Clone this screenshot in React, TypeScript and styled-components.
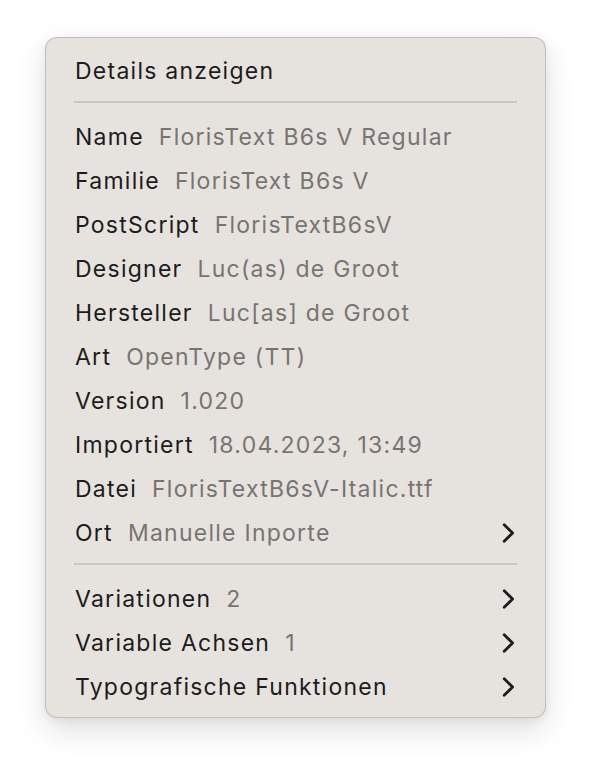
import React from "react";
import styled, { createGlobalStyle } from "styled-components";

const Global = createGlobalStyle`
  html, body { margin: 0; padding: 0; background: #ffffff; }
  body { font-family: Inter, "Noto Sans", sans-serif; -webkit-font-smoothing: antialiased; }
`;

const Page = styled.div`
  width: 592px;
  height: 772px;
  padding: 37px 0 0 45px;
  box-sizing: border-box;
`;

const Menu = styled.div`
  width: 501px;
  box-sizing: border-box;
  background: #e6e3df;
  border: 1px solid rgba(0, 0, 0, 0.16);
  border-radius: 12px;
  padding: 11px 0 8px;
  box-shadow: 0 12px 30px rgba(0, 0, 0, 0.13), 0 2px 8px rgba(0, 0, 0, 0.06);
`;

const Item = styled.div`
  height: 44px;
  display: flex;
  align-items: center;
  padding: 0 30px 0 29px;
  font-size: 23px;
  letter-spacing: 1.25px;
  line-height: 44px;
  color: #1c1c1c;
  white-space: nowrap;
`;

const Label = styled.span`
  color: #1c1c1c;
`;

const Value = styled.span`
  color: #777471;
  margin-left: 15px;
`;

const Spacer = styled.span`
  flex: 1;
`;

const Separator = styled.div`
  height: 2px;
  margin: 8px 28px 12px 28px;
  background: #cac6c2;
`;

const Chevron = () => (
  <svg width="13" height="20" viewBox="0 0 13 20" aria-hidden="true">
    <polyline
      points="2.2,1.8 10.6,10 2.2,18.2"
      fill="none"
      stroke="#1c1c1c"
      strokeWidth="2.8"
      strokeLinecap="round"
      strokeLinejoin="round"
    />
  </svg>
);

type Row = { label: string; value?: string; sub?: boolean };

const details: Row[] = [
  { label: "Name", value: "FlorisText B6s V Regular" },
  { label: "Familie", value: "FlorisText B6s V" },
  { label: "PostScript", value: "FlorisTextB6sV" },
  { label: "Designer", value: "Luc(as) de Groot" },
  { label: "Hersteller", value: "Luc[as] de Groot" },
  { label: "Art", value: "OpenType (TT)" },
  { label: "Version", value: "1.020" },
  { label: "Importiert", value: "18.04.2023, 13:49" },
  { label: "Datei", value: "FlorisTextB6sV-Italic.ttf" },
  { label: "Ort", value: "Manuelle Inporte", sub: true },
];

const more: Row[] = [
  { label: "Variationen", value: "2", sub: true },
  { label: "Variable Achsen", value: "1", sub: true },
  { label: "Typografische Funktionen", sub: true },
];

const MenuRow = ({ row }: { row: Row }) => (
  <Item>
    <Label>{row.label}</Label>
    {row.value && <Value>{row.value}</Value>}
    <Spacer />
    {row.sub && <Chevron />}
  </Item>
);

export default function App() {
  return (
    <Page>
      <Global />
      <Menu>
        <Item>
          <Label>Details anzeigen</Label>
        </Item>
        <Separator />
        {details.map((r) => (
          <MenuRow key={r.label} row={r} />
        ))}
        <Separator />
        {more.map((r) => (
          <MenuRow key={r.label} row={r} />
        ))}
      </Menu>
    </Page>
  );
}
